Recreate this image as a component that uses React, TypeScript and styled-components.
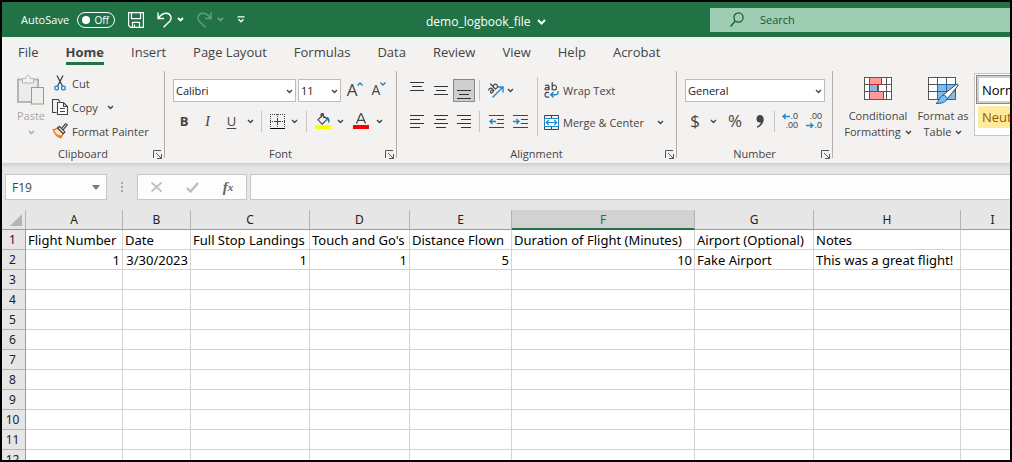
import React from "react";
import styled, { createGlobalStyle, css } from "styled-components";

const GREEN = "#217346";
const INK = "#444444";
const BLUE = "#1e87cc";

const GlobalStyle = createGlobalStyle`
  *, *::before, *::after { box-sizing: border-box; }
  html, body { margin: 0; padding: 0; background: #fff; }
  body { font-family: "Open Sans", "Noto Sans", sans-serif; font-size: 11px; color: ${INK}; }
  button, input, select { font: inherit; color: inherit; margin: 0; }
  svg { display: block; flex: none; }
`;

const Window = styled.div`
  height: 100vh;
  display: flex;
  flex-direction: column;
  border: 2px solid #000;
  overflow: hidden;
  background: #fff;
`;

/* Title bar */

const TitleBar = styled.header`
  flex: none;
  display: grid;
  grid-template-columns: 424px 1fr 300px;
  align-items: center;
  height: 35px;
  background: ${GREEN};
  color: #fff;
`;

const QuickTools = styled.div`
  display: flex;
  align-items: center;
  gap: 13px;
  padding-left: 19px;
`;

const AutoSave = styled.label`
  display: flex;
  align-items: center;
  gap: 8px;
  white-space: nowrap;
`;

const Toggle = styled.button`
  display: flex;
  align-items: center;
  justify-content: space-between;
  width: 38px;
  height: 16px;
  padding: 0 5px 0 4px;
  border: 1px solid #fff;
  border-radius: 8px;
  background: transparent;
  font-size: 10px;
  line-height: 14px;
`;

const Knob = styled.span`
  width: 8px;
  height: 8px;
  border-radius: 50%;
  background: #fff;
`;

const SplitButton = styled.div<{ $dim?: boolean }>`
  display: flex;
  align-items: center;
  gap: 5px;
  opacity: ${(p) => (p.$dim ? 0.3 : 1)};
`;

const PlainButton = styled.button<{ $w?: number; $h?: number; $on?: boolean }>`
  flex: none;
  display: flex;
  align-items: center;
  justify-content: center;
  width: ${(p) => (p.$w ? `${p.$w}px` : "auto")};
  height: ${(p) => p.$h ?? 24}px;
  padding: 0;
  border: 0;
  background: transparent;
  white-space: nowrap;
  ${(p) =>
    p.$on &&
    css`
      border: 1px solid #8a8886;
      background: #cfcecd;
    `}
`;

const FileName = styled.button`
  display: flex;
  align-items: center;
  gap: 6px;
  padding: 4px 0 0;
  border: 0;
  background: transparent;
  font-size: 12px;
  line-height: 16px;
`;

const SearchBox = styled.label`
  display: flex;
  align-items: center;
  gap: 16px;
  height: 24px;
  padding-left: 20px;
  background: #9fcdb3;
  color: #0e5c2f;
`;

const SearchInput = styled.input`
  flex: 1;
  min-width: 0;
  padding: 0;
  border: 0;
  outline: 0;
  background: transparent;
  &::placeholder { color: #0e5c2f; opacity: 1; }
`;

/* Ribbon */

const Tabs = styled.nav`
  flex: none;
  display: flex;
  gap: 27px;
  height: 34px;
  padding: 5px 16px 0;
  background: #f3f2f1;
`;

const Tab = styled.a<{ $active?: boolean }>`
  height: 23px;
  font-size: 13px;
  line-height: 20px;
  color: ${INK};
  text-decoration: none;
  white-space: nowrap;
  font-weight: ${(p) => (p.$active ? 700 : 400)};
  border-bottom: 3px solid ${(p) => (p.$active ? GREEN : "transparent")};
`;

const Ribbon = styled.section`
  flex: none;
  display: flex;
  height: 92px;
  background: #f3f2f1;
`;

const Group = styled.div<{ $w: number }>`
  flex: none;
  display: flex;
  flex-direction: column;
  width: ${(p) => p.$w}px;
  padding-right: 1px;
  background: linear-gradient(#b3b0ad, #b3b0ad) right top / 1px 87px no-repeat;
`;

const GroupBody = styled.div`
  flex: none;
  display: flex;
  height: 76px;
  padding-left: 8px;
`;

const GroupFooter = styled.div`
  display: grid;
  grid-template-columns: 14px 1fr 14px;
  align-items: center;
  height: 14px;
  text-align: center;
  line-height: 14px;
`;

const Stack = styled.div`
  display: flex;
  flex-direction: column;
`;

const ToolRow = styled.div<{ $h: number; $gap?: number }>`
  display: flex;
  align-items: center;
  gap: ${(p) => p.$gap ?? 0}px;
  height: ${(p) => p.$h}px;
`;

const LabelButton = styled.button`
  display: flex;
  align-items: center;
  gap: 4px;
  height: 24px;
  padding: 0;
  border: 0;
  background: transparent;
  white-space: nowrap;
`;

const IconSlot = styled.span`
  display: flex;
  justify-content: center;
  width: 16px;
`;

const BigButton = styled.button<{ $w: number; $faded?: boolean }>`
  flex: none;
  display: flex;
  flex-direction: column;
  align-items: center;
  width: ${(p) => p.$w}px;
  height: 72px;
  padding: 4px 0 0;
  border: 0;
  background: transparent;
  line-height: 16px;
  white-space: nowrap;
  color: ${(p) => (p.$faded ? "#a6a6a6" : INK)};
`;

const BigIcon = styled.span<{ $top?: number }>`
  height: 33px;
  padding-top: ${(p) => p.$top ?? 0}px;
`;

const BigCaption = styled.span`
  display: flex;
  align-items: center;
  gap: 4px;
  height: 16px;
`;

const Divider = styled.span<{ $h: number; $side: number }>`
  flex: none;
  width: 1px;
  height: ${(p) => p.$h}px;
  margin: 0 ${(p) => p.$side}px;
  background: #c8c6c4;
`;

const SelectWrap = styled.div<{ $w: number }>`
  position: relative;
  flex: none;
  width: ${(p) => p.$w}px;
  height: 23px;
  > svg {
    position: absolute;
    right: 3px;
    top: 10px;
    pointer-events: none;
  }
`;

const Select = styled.select`
  appearance: none;
  width: 100%;
  height: 23px;
  padding: 0 14px 0 2px;
  border: 1px solid #bebbb8;
  border-radius: 0;
  background: #fff;
  color: #222;
`;

const Glyph = styled.span<{ $size: number; $bold?: boolean; $italic?: boolean; $under?: boolean }>`
  font-size: ${(p) => p.$size}px;
  line-height: 20px;
  font-weight: ${(p) => (p.$bold ? 700 : 400)};
  font-family: ${(p) => (p.$italic ? '"Liberation Serif", serif' : "inherit")};
  font-style: ${(p) => (p.$italic ? "italic" : "normal")};
  text-decoration: ${(p) => (p.$under ? "underline" : "none")};
  text-underline-offset: 2px;
`;

const Gallery = styled.div`
  flex: 1;
  min-width: 0;
  height: 63px;
  margin: 2px 0 0 3px;
  padding: 1px 0 0 1px;
  border: 1px solid #c8c6c4;
  border-right: 0;
  background: #fff;
  overflow: hidden;
`;

const StylesBody = styled(GroupBody)`
  flex: 1;
`;

const StyleTile = styled.button<{ $neutral?: boolean }>`
  display: block;
  width: 80px;
  text-align: left;
  white-space: nowrap;
  font-size: 13px;
  ${(p) =>
    p.$neutral
      ? css`
          height: 22px;
          margin: 2px 0 0 2px;
          padding: 0 4px;
          border: 0;
          background: #ffeb9c;
          color: #9c5700;
        `
      : css`
          height: 29px;
          padding: 0 5px;
          border: 1px solid #8a8886;
          box-shadow: inset 0 0 0 2px #d2d0ce;
          background: #fff;
          color: #000;
        `}
`;

/* Formula bar */

const FormulaBar = styled.div`
  flex: none;
  display: flex;
  height: 47px;
  padding: 11px 0 10px 3px;
  background: linear-gradient(#cfcfcf, #e6e6e6 5px);
  font-size: 12px;
`;

const NameBox = styled.label`
  display: flex;
  align-items: center;
  width: 102px;
  padding: 0 6px;
  border: 1px solid #c6c6c6;
  background: #fdfdfd;
`;

const BareInput = styled.input`
  flex: 1;
  min-width: 0;
  padding: 0;
  border: 0;
  outline: 0;
  background: transparent;
`;

const Grip = styled.span`
  display: flex;
  align-items: center;
  justify-content: center;
  width: 30px;
`;

const FormulaTools = styled.div`
  display: flex;
  align-items: center;
  width: 110px;
  border: 1px solid #c6c6c6;
  background: #fdfdfd;
  color: #666;
`;

const FormulaInput = styled.input`
  flex: 1;
  min-width: 0;
  margin-left: 3px;
  padding: 0 6px;
  border: 1px solid #c6c6c6;
  border-right: 0;
  border-radius: 0;
  outline: 0;
  background: #fdfdfd;
`;

/* Sheet */

const SheetArea = styled.main`
  flex: 1;
  min-height: 0;
  overflow: hidden;
`;

const Sheet = styled.table`
  width: 100%;
  table-layout: fixed;
  border-collapse: separate;
  border-spacing: 0;
  font-family: "Noto Sans", "Open Sans", sans-serif;
  font-size: 13px;
  line-height: 18px;
  color: #000;
`;

const ColHead = styled.th<{ $selected?: boolean }>`
  height: 20px;
  padding: 0;
  font-weight: 400;
  font-size: 12px;
  line-height: 17px;
  border-right: 1px solid #b4b4b4;
  border-bottom: 1px solid #9b9b9b;
  background: #e6e6e6;
  color: #222;
  ${(p) =>
    p.$selected &&
    css`
      background: #d2d2d2;
      border-bottom: 2px solid ${GREEN};
      color: ${GREEN};
    `}
`;

const Corner = styled.td`
  padding: 0 3px 3px 0;
  border-right: 1px solid #b4b4b4;
  border-bottom: 1px solid #9b9b9b;
  background: #e6e6e6;
  vertical-align: bottom;
  > svg { margin-left: auto; }
`;

const RowHead = styled.th`
  height: 20px;
  padding: 0 2px 0 0;
  font-weight: 400;
  font-size: 12px;
  border-right: 1px solid #9b9b9b;
  border-bottom: 1px solid #b4b4b4;
  background: #e6e6e6;
  color: #222;
`;

const Cell = styled.td<{ $right?: boolean }>`
  height: 20px;
  padding: 1px 2px 0;
  border-right: 1px solid #d4d4d4;
  border-bottom: 1px solid #d4d4d4;
  text-align: ${(p) => (p.$right ? "right" : "left")};
  white-space: nowrap;
`;

/* Icons */

const Caret = ({ size = 7, width = 1.4 }: { size?: number; width?: number }) => (
  <svg width={size} height={size === 7 ? 5 : 6} viewBox={size === 7 ? "0 0 7 5" : "0 0 9 6"} fill="none" stroke="currentColor" strokeWidth={width}>
    <path d={size === 7 ? "M1 1l2.5 2.5L6 1" : "M1 1l3.5 3.5L8 1"} />
  </svg>
);

const Launcher = () => (
  <svg width="9" height="9" viewBox="0 0 9 9" fill="none" stroke="#555">
    <path d="M.5 8V.5H8M3 3l5 5M8.500 4v4.500H4" />
  </svg>
);

const SaveIcon = () => (
  <svg width="16" height="16" viewBox="0 0 16 16" fill="none" stroke="#fff" strokeWidth="1.2">
    <path d="M.6.6h14.800v14.800H2.600l-2-2zM3.500.6v6h9v-6M4.500 15.400v-5h7v5M6.500 15v-2.500" />
  </svg>
);

const UndoIcon = () => (
  <svg width="15" height="16" viewBox="0 0 15 16" fill="none" stroke="#fff" strokeWidth="1.4">
    <path d="M1 .5v6h6M1.200 6.300C4 2.500 6.500 1 9.500 1.200c4.300.4 5.800 4.800 3.300 8L6.500 15.300" />
  </svg>
);

const RedoIcon = () => (
  <svg width="15" height="16" viewBox="0 0 15 16" fill="none" stroke="#fff" strokeWidth="1.4">
    <path d="M14 .5v6H8M13.800 6.300C11 2.500 8.500 1 5.500 1.200 1.200 1.600-.3 6 2.200 9.200l6.300 6.100" />
  </svg>
);

const CustomizeIcon = () => (
  <svg width="8" height="7" viewBox="0 0 8 7" fill="none" stroke="#fff" strokeWidth="1.300">
    <path d="M.5.800h7M1.500 3.300L4 5.800l2.500-2.500" />
  </svg>
);

const SearchIcon = () => (
  <svg width="14" height="16" viewBox="0 0 14 16" fill="none" stroke="currentColor" strokeWidth="1.200">
    <circle cx="8.500" cy="5.500" r="4.600" />
    <path d="M5.300 9L.6 14.500" />
  </svg>
);

const PasteIcon = () => (
  <svg width="28" height="30" viewBox="0 0 28 30" fill="none" stroke="#b5b5b5">
    <rect x="1" y="4.500" width="20" height="22.500" strokeWidth="2" fill="#ececec" />
    <path d="M5.500 8V3.500h3C9 1.500 9.800.500 11 .5s2 1 2.500 3h3V8z" fill="#f3f2f1" />
    <rect x="14.500" y="12.500" width="12" height="16.500" fill="#f0efee" stroke="#999" />
  </svg>
);

const CutIcon = () => (
  <svg width="12" height="16" viewBox="0 0 12 16" fill="none">
    <path d="M3 .5l5.600 11M9 .5L3.400 11.500" stroke="#444" strokeWidth="1.300" />
    <circle cx="2.600" cy="13" r="1.900" stroke={BLUE} strokeWidth="1.300" />
    <circle cx="9.400" cy="13" r="1.900" stroke={BLUE} strokeWidth="1.300" />
  </svg>
);

const CopyIcon = () => (
  <svg width="16" height="16" viewBox="0 0 16 16" fill="none" stroke="#444" strokeWidth="1.100">
    <path d="M4.500 13.500h-4V.5H6l2 2" />
    <path d="M5.500 3.500h6l4 4v8h-10zM11.500 3.500v4h4M8 9.500h5M8 12.500h5" fill="#fff" />
  </svg>
);

const PainterIcon = () => (
  <svg width="16" height="16" viewBox="0 0 16 16" fill="none">
    <path d="M1.200 6.800c2-.3 3.300-.8 4.400-1.800l5.600 5.600-2.400 4.200c-3.500-1-6-3.600-7.600-8z" fill="#fbe3cd" stroke="#e8761a" strokeWidth="1.300" />
    <path d="M4.500 11l4.500 3.500.800-1.700-3.500-1z" fill="#e8761a" />
    <path d="M5.600 5l1.700-1.700 5.600 5.600-1.700 1.700zM9.500 5.300L13.400 1c.7-.7 2.200.6 1.500 1.400L11 6.800" stroke="#444" strokeWidth="1.200" fill="#f3f2f1" />
  </svg>
);

const GrowIcon = ({ down }: { down?: boolean }) => (
  <svg width="6" height="4" viewBox="0 0 6 4" fill="none" stroke={BLUE} strokeWidth="1.400">
    <path d={down ? "M.5.5L3 3 5.500.5" : "M.5 3.500L3 1l2.500 2.500"} />
  </svg>
);

const GrowLabel = styled.span`
  display: flex;
  align-items: flex-start;
  > svg { margin-top: 2px; }
`;

const BorderIcon = () => (
  <svg width="15" height="15" viewBox="0 0 15 15" fill="none" stroke="#444" shapeRendering="crispEdges">
    <path d="M0 .5h15M.5 0v14M14.500 0v14M7.500 0v14M0 7.500h15" strokeDasharray="1 1" />
    <path d="M5 7.500h5M7.500 5v5" />
    <path d="M0 14.500h15" stroke="#000" />
  </svg>
);

const BucketIcon = () => (
  <svg width="16" height="16" viewBox="0 0 16 16" fill="none">
    <path d="M7.500 2L3 6.800l4.200 4.300 5-5zM6 5V1.500C6 .3 8.500.3 8.500 1.500V5" stroke="#444" strokeWidth="1.100" />
    <path d="M11 4c3 0 3.800 1.500 3.500 6-1.500-.6-2-2-2-3.500z" fill="#1b6fb5" />
    <path d="M0 12h16v4H0z" fill="#ff0" />
  </svg>
);

const FontColorIcon = () => (
  <svg width="16" height="16" viewBox="0 0 16 16" fill="none">
    <path d="M3.500 10.500L7.600.8h.8l4.100 9.700M5 7.300h6" stroke="#444" strokeWidth="1.300" />
    <path d="M0 12h16v4H0z" fill="#f00" />
  </svg>
);

const Lines = ({ spans, top = 0, height = 13, step = 4 }: { spans: [number, number][]; top?: number; height?: number; step?: number }) => (
  <svg width="14" height={height} viewBox={`0 0 14 ${height}`} stroke="#333" shapeRendering="crispEdges">
    {spans.map(([a, b], i) => (
      <path key={i} d={`M${a} ${top + i * step + 0.5}H${b}`} />
    ))}
  </svg>
);

const OrientationIcon = () => (
  <svg width="17" height="17" viewBox="0 0 17 17" fill="none">
    <g stroke="#444" strokeWidth="1.200" transform="rotate(-45 6 6)">
      <path d="M1.200 4.700c1-1 3.600-.9 3.600.8V9M4.800 6.500C2.500 6.300 1 6.700 1 7.800c0 1.400 3 1.500 3.800-.3" />
      <path d="M7 1v8M7 5.500c1-1.700 4-1.500 4 1s-3 2.900-4 1.200" />
    </g>
    <path d="M5.500 15.500L15.500 5.500M10.500 5h5.500v5.500" stroke={BLUE} strokeWidth="1.400" />
  </svg>
);

const IndentIcon = ({ out }: { out?: boolean }) => (
  <svg width="15" height="13" viewBox="0 0 15 13" fill="none">
    <path d="M0 .5h15M8 4.500h7M8 8.500h7M0 12.500h15" stroke="#444" shapeRendering="crispEdges" />
    <path d={out ? "M7 6.500H1M3.500 4L1 6.500 3.500 9" : "M0 6.500h6M3.500 4L6 6.500 3.500 9"} stroke={BLUE} strokeWidth="1.400" />
  </svg>
);

const WrapIcon = () => (
  <svg width="15" height="16" viewBox="0 0 15 16" fill="none">
    <g stroke="#444" strokeWidth="1.200">
      <path d="M1.200 3.700c1.500-1 3.800-.8 3.800 1V8M5 5.400C2.500 5.400 1 5.800 1 6.900c0 1.500 3.300 1.500 4-.4" />
      <path d="M8.200 0v8M8.200 4.500c1-2 4.300-1.700 4.300 1 0 3-3.300 3.100-4.300 1.200" />
      <path d="M5 10.800c-1.800-1-4-.2-4 2s2.200 3 4 1.900" />
    </g>
    <path d="M14 9c.6 2.800-1 3.800-3 3.800H7M9.500 10L6.800 12.800l2.700 2.700" stroke={BLUE} strokeWidth="1.400" />
  </svg>
);

const MergeIcon = () => (
  <svg width="15" height="15" viewBox="0 0 15 15" fill="none">
    <path d="M.5.5h14v14H.5zM7.500.5v3M7.500 11.500v3" stroke="#444" />
    <path d="M.5 3.500h14v8H.5z" stroke={BLUE} fill="#fff" />
    <path d="M2.500 7.500h10M4.800 5L2.300 7.500 4.800 10M10.200 5l2.500 2.500L10.200 10" stroke={BLUE} strokeWidth="1.200" />
  </svg>
);

const DecimalArt = styled.span`
  display: flex;
  flex-direction: column;
  width: 16px;
  font-family: "Liberation Sans", Arial, sans-serif;
  font-size: 9px;
  line-height: 9px;
  > span {
    display: flex;
    align-items: center;
    justify-content: flex-end;
    height: 9px;
  }
`;

const SmallArrow = ({ right }: { right?: boolean }) => (
  <svg width="8" height="7" viewBox="0 0 8 7" fill="none" stroke={BLUE} strokeWidth="1.300">
    <path d={right ? "M0 3.500h7M4.300 1L7 3.500 4.300 6" : "M8 3.500H1M3.700 1L1 3.500 3.700 6"} />
  </svg>
);

const CommaIcon = () => (
  <svg width="8" height="13" viewBox="0 0 8 13" fill="#444">
    <path d="M4 0c2.400 0 3.700 1.700 3.700 4.200 0 4-2.700 7.200-6.700 8.600v-1.600c2.300-1.100 3.500-2.400 3.700-4C2.300 8 .5 6.400.5 4 .5 1.600 2 0 4 0z" />
  </svg>
);

const ConditionalIcon = () => (
  <svg width="28" height="23" viewBox="0 0 28 23" fill="none" shapeRendering="crispEdges">
    <path d="M.5.5h27v21.500H.5zM0 7.500h28M0 14.500h28M5.500 0v22M14 0v22M22.500 0v22" stroke="#555" fill="#fff" />
    <path d="M5.500 .5h12v7h-12zM5.500 14.500h14v7.500h-14z" fill="#ff9a9a" stroke="#d22" />
    <path d="M5 8h9v6H5z" fill="#83bbe8" />
    <path d="M5.500 8v6M13.500 8v6" stroke="#1668b0" />
  </svg>
);

const FormatTableIcon = () => (
  <svg width="31" height="27" viewBox="0 0 31 27" fill="none">
    <g shapeRendering="crispEdges">
      <path d="M.5.5h27v21.500H.5zM0 7.500h28M0 14.500h28M9.500 0v22M18.500 0v22" stroke="#555" fill="#fff" />
      <path d="M9.500 7.500h18V22h-18z" fill="#83bbe8" stroke="#1668b0" />
      <path d="M9 14.500h19M18.500 7v15" stroke="#1668b0" />
    </g>
    <path d="M15 18L28 7.500c1.500-1 2.500 0 1.700 1.500L19.500 21.500z" fill="#fff" stroke="#444" />
    <path d="M15 18c2 .3 4 1.600 4.300 3.700-1.600 3.800-6 5-11.300 4.800 3-1.700 3.200-6.700 7-8.500z" fill="#83bbe8" stroke="#1668b0" />
  </svg>
);

const CornerIcon = () => (
  <svg width="12" height="12" viewBox="0 0 12 12" fill="#b4b4b4">
    <path d="M12 0v12H0z" />
  </svg>
);

/* Data */

const TABS = ["File", "Home", "Insert", "Page Layout", "Formulas", "Data", "Review", "View", "Help", "Acrobat"];

/* The last, unnamed column takes up whatever width a wider window leaves. */
const COLUMNS: { name: string; width?: number }[] = [
  { name: "A", width: 97 },
  { name: "B", width: 68 },
  { name: "C", width: 119 },
  { name: "D", width: 100 },
  { name: "E", width: 102 },
  { name: "F", width: 183 },
  { name: "G", width: 119 },
  { name: "H", width: 147 },
  { name: "I", width: 64 },
  { name: "" },
];

const ROWS: (string | number)[][] = [
  ["Flight Number", "Date", "Full Stop Landings", "Touch and Go's", "Distance Flown", "Duration of Flight (Minutes)", "Airport (Optional)", "Notes"],
  [1, "3/30/2023", 1, 1, 5, 10, "Fake Airport", "This was a great flight!"],
];

const Footer = ({ label }: { label: string }) => (
  <GroupFooter>
    <span />
    <span>{label}</span>
    <PlainButton $h={14} $w={14} aria-label={`${label} settings`}>
      <Launcher />
    </PlainButton>
  </GroupFooter>
);

const Dropdown = ({ width, value, label }: { width: number; value: string; label: string }) => (
  <SelectWrap $w={width}>
    <Select aria-label={label} defaultValue={value}>
      <option>{value}</option>
    </Select>
    <Caret />
  </SelectWrap>
);

export default function App() {
  return (
    <>
      <GlobalStyle />
      <Window>
        <TitleBar>
          <QuickTools>
            <AutoSave>
              AutoSave
              <Toggle role="switch" aria-checked={false}>
                <Knob />
                Off
              </Toggle>
            </AutoSave>
            <PlainButton aria-label="Save"><SaveIcon /></PlainButton>
            <SplitButton>
              <PlainButton aria-label="Undo"><UndoIcon /></PlainButton>
              <PlainButton aria-label="Undo history"><Caret width={1.8} /></PlainButton>
            </SplitButton>
            <SplitButton $dim>
              <PlainButton aria-label="Redo"><RedoIcon /></PlainButton>
              <PlainButton aria-label="Redo history"><Caret width={1.8} /></PlainButton>
            </SplitButton>
            <PlainButton aria-label="Customize toolbar"><CustomizeIcon /></PlainButton>
          </QuickTools>
          <FileName>
            demo_logbook_file
            <Caret size={9} width={2} />
          </FileName>
          <SearchBox>
            <SearchIcon />
            <SearchInput placeholder="Search" aria-label="Search" />
          </SearchBox>
        </TitleBar>

        <Tabs>
          {TABS.map((t) => (
            <Tab key={t} href="#" $active={t === "Home"}>{t}</Tab>
          ))}
        </Tabs>

        <Ribbon>
          <Group $w={163}>
            <GroupBody>
              <BigButton $w={42} $faded>
                <BigIcon><PasteIcon /></BigIcon>
                <BigCaption>Paste</BigCaption>
                <BigCaption><Caret /></BigCaption>
              </BigButton>
              <Stack>
                <LabelButton><IconSlot><CutIcon /></IconSlot>Cut</LabelButton>
                <ToolRow $h={24} $gap={9}>
                  <LabelButton><IconSlot><CopyIcon /></IconSlot>Copy</LabelButton>
                  <PlainButton aria-label="Copy options"><Caret /></PlainButton>
                </ToolRow>
                <LabelButton><IconSlot><PainterIcon /></IconSlot>Format Painter</LabelButton>
              </Stack>
            </GroupBody>
            <Footer label="Clipboard" />
          </Group>

          <Group $w={232}>
            <GroupBody>
              <Stack>
                <ToolRow $h={38}>
                  <ToolRow $h={23} $gap={2}>
                    <Dropdown width={123} value="Calibri" label="Font" />
                    <Dropdown width={43} value="11" label="Font size" />
                  </ToolRow>
                  <PlainButton $w={28} aria-label="Increase font size">
                    <GrowLabel><Glyph $size={17}>A</Glyph><GrowIcon /></GrowLabel>
                  </PlainButton>
                  <PlainButton $w={20} aria-label="Decrease font size">
                    <GrowLabel><Glyph $size={14}>A</Glyph><GrowIcon down /></GrowLabel>
                  </PlainButton>
                </ToolRow>
                <ToolRow $h={24}>
                  <PlainButton $w={22}><Glyph $size={13} $bold>B</Glyph></PlainButton>
                  <PlainButton $w={25}><Glyph $size={15} $italic>I</Glyph></PlainButton>
                  <PlainButton $w={23}><Glyph $size={13} $under>U</Glyph></PlainButton>
                  <PlainButton $w={14} aria-label="Underline options"><Caret /></PlainButton>
                  <Divider $h={21} $side={4} />
                  <PlainButton $w={22} aria-label="Borders"><BorderIcon /></PlainButton>
                  <PlainButton $w={12} aria-label="Border options"><Caret /></PlainButton>
                  <Divider $h={21} $side={6} />
                  <PlainButton $w={20} aria-label="Fill color"><BucketIcon /></PlainButton>
                  <PlainButton $w={14} aria-label="Fill color options"><Caret /></PlainButton>
                  <PlainButton $w={28} aria-label="Font color"><FontColorIcon /></PlainButton>
                  <PlainButton $w={8} aria-label="Font color options"><Caret /></PlainButton>
                </ToolRow>
              </Stack>
            </GroupBody>
            <Footer label="Font" />
          </Group>

          <Group $w={280}>
            <GroupBody>
              <Stack>
                <ToolRow $h={38}>
                  <PlainButton $w={24} aria-label="Top align"><Lines height={17} spans={[[0, 14], [2, 12], [0, 14]]} /></PlainButton>
                  <PlainButton $w={24} aria-label="Middle align"><Lines height={13} top={2} spans={[[0, 14], [2, 12], [0, 14]]} /></PlainButton>
                  <PlainButton $w={22} $h={23} $on aria-label="Bottom align"><Lines height={17} top={8} spans={[[0, 14], [2, 12], [0, 14]]} /></PlainButton>
                  <Divider $h={21} $side={4} />
                  <PlainButton $w={22} aria-label="Orientation"><OrientationIcon /></PlainButton>
                  <PlainButton $w={8} aria-label="Orientation options"><Caret /></PlainButton>
                </ToolRow>
                <ToolRow $h={24}>
                  <PlainButton $w={24} aria-label="Align left"><Lines spans={[[0, 14], [0, 10], [0, 14], [0, 10]]} /></PlainButton>
                  <PlainButton $w={24} aria-label="Center"><Lines spans={[[0, 14], [2, 12], [0, 14], [2, 12]]} /></PlainButton>
                  <PlainButton $w={22} aria-label="Align right"><Lines spans={[[0, 14], [4, 14], [0, 14], [4, 14]]} /></PlainButton>
                  <Divider $h={21} $side={4} />
                  <PlainButton $w={24} aria-label="Decrease indent"><IndentIcon out /></PlainButton>
                  <PlainButton $w={24} aria-label="Increase indent"><IndentIcon /></PlainButton>
                </ToolRow>
              </Stack>
              <ToolRow $h={71}><Divider $h={59} $side={5} /></ToolRow>
              <Stack>
                <ToolRow $h={38}>
                  <LabelButton><IconSlot><WrapIcon /></IconSlot>Wrap Text</LabelButton>
                </ToolRow>
                <ToolRow $h={26} $gap={13}>
                  <LabelButton><IconSlot><MergeIcon /></IconSlot>Merge &amp; Center</LabelButton>
                  <PlainButton aria-label="Merge options"><Caret /></PlainButton>
                </ToolRow>
              </Stack>
            </GroupBody>
            <Footer label="Alignment" />
          </Group>

          <Group $w={156}>
            <GroupBody>
              <Stack>
                <ToolRow $h={38}>
                  <Dropdown width={140} value="General" label="Number format" />
                </ToolRow>
                <ToolRow $h={24}>
                  <PlainButton $w={20}><Glyph $size={17}>$</Glyph></PlainButton>
                  <PlainButton $w={16} aria-label="Currency options"><Caret /></PlainButton>
                  <PlainButton $w={28}><Glyph $size={17}>%</Glyph></PlainButton>
                  <PlainButton $w={22} aria-label="Comma style"><CommaIcon /></PlainButton>
                  <Divider $h={21} $side={3} />
                  <PlainButton $w={24} aria-label="Increase decimal">
                    <DecimalArt><span><SmallArrow />.0</span><span>.00</span></DecimalArt>
                  </PlainButton>
                  <PlainButton $w={24} aria-label="Decrease decimal">
                    <DecimalArt><span>.00</span><span><SmallArrow right />.0</span></DecimalArt>
                  </PlainButton>
                </ToolRow>
              </Stack>
            </GroupBody>
            <Footer label="Number" />
          </Group>

          <StylesBody>
            <BigButton $w={74}>
              <BigIcon $top={2}><ConditionalIcon /></BigIcon>
              <BigCaption>Conditional</BigCaption>
              <BigCaption>Formatting <Caret /></BigCaption>
            </BigButton>
            <BigButton $w={56}>
              <BigIcon $top={2}><FormatTableIcon /></BigIcon>
              <BigCaption>Format as</BigCaption>
              <BigCaption>Table <Caret /></BigCaption>
            </BigButton>
            <Gallery>
              <StyleTile>Normal</StyleTile>
              <StyleTile $neutral>Neutral</StyleTile>
            </Gallery>
          </StylesBody>
        </Ribbon>

        <FormulaBar>
          <NameBox>
            <BareInput defaultValue="F19" aria-label="Name box" />
            <svg width="8" height="5" viewBox="0 0 8 5" fill="#777"><path d="M0 0h8L4 5z" /></svg>
          </NameBox>
          <Grip>
            <svg width="2" height="10" viewBox="0 0 2 10" fill="#a6a6a6"><path d="M0 0h2v2H0zM0 4h2v2H0zM0 8h2v2H0z" /></svg>
          </Grip>
          <FormulaTools>
            <PlainButton $w={36} aria-label="Cancel">
              <svg width="11" height="10" viewBox="0 0 11 10" stroke="#bdbdbd" strokeWidth="1.800"><path d="M.5.5l10 9M10.500.5l-10 9" /></svg>
            </PlainButton>
            <PlainButton $w={36} aria-label="Enter">
              <svg width="13" height="11" viewBox="0 0 13 11" fill="none" stroke="#bdbdbd" strokeWidth="2.400"><path d="M1 6l3.500 3.500L12 1" /></svg>
            </PlainButton>
            <PlainButton $w={36} aria-label="Insert function">
              <Glyph $size={15} $italic $bold>f</Glyph>
              <Glyph $size={11} $italic $bold>x</Glyph>
            </PlainButton>
          </FormulaTools>
          <FormulaInput aria-label="Formula" />
        </FormulaBar>

        <SheetArea>
          <Sheet>
            <colgroup>
              <col width={24} />
              {COLUMNS.map((c) => (
                <col key={c.name} width={c.width} />
              ))}
            </colgroup>
            <thead>
              <tr>
                <Corner><CornerIcon /></Corner>
                {COLUMNS.map((c) => (
                  <ColHead key={c.name} scope="col" $selected={c.name === "F"}>{c.name}</ColHead>
                ))}
              </tr>
            </thead>
            <tbody>
              {Array.from({ length: 12 }, (_, r) => (
                <tr key={r}>
                  <RowHead scope="row">{r + 1}</RowHead>
                  {COLUMNS.map((c, i) => {
                    const value = ROWS[r]?.[i];
                    return (
                      <Cell key={c.name} $right={typeof value === "number" || value === "3/30/2023"}>{value}</Cell>
                    );
                  })}
                </tr>
              ))}
            </tbody>
          </Sheet>
        </SheetArea>
      </Window>
    </>
  );
}
